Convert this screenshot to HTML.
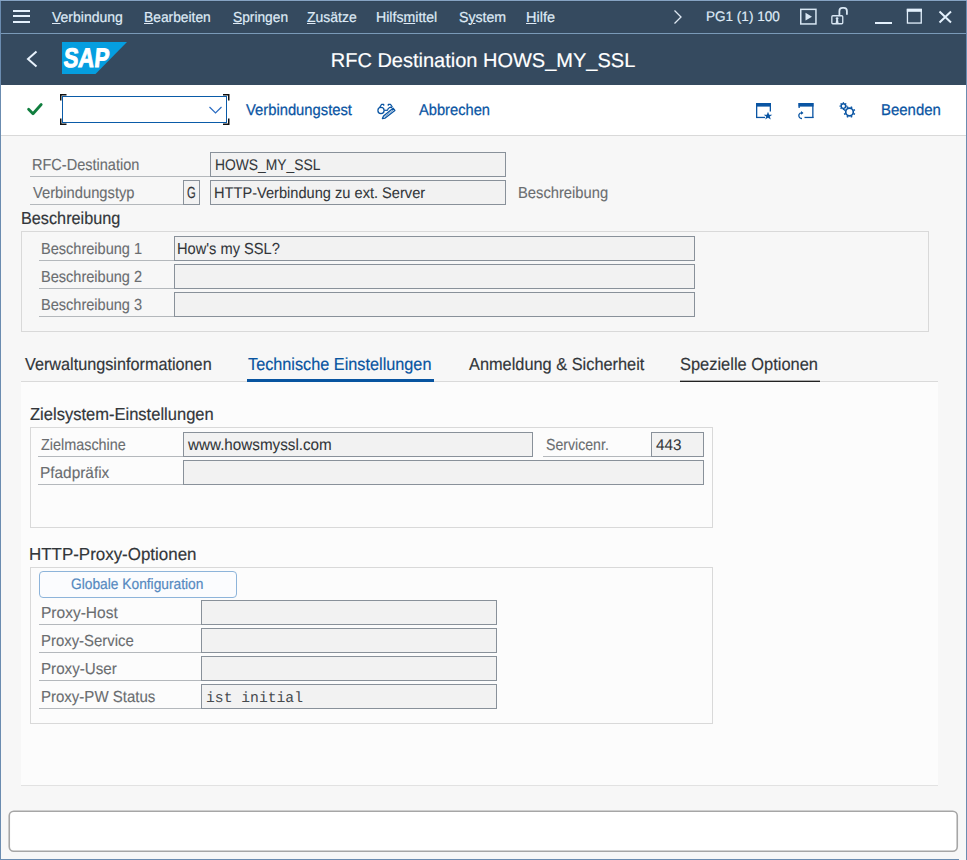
<!DOCTYPE html>
<html><head><meta charset="utf-8"><style>
html,body{margin:0;padding:0;width:967px;height:860px;overflow:hidden;background:#f7f7f7;text-rendering:geometricPrecision}
</style></head><body>
<div style="position:absolute;left:0px;top:0px;width:967px;height:860px;background:#f7f7f7"></div>
<div style="position:absolute;left:1px;top:1px;width:965px;height:84px;background:#354a5f"></div>
<div style="position:absolute;left:1px;top:1px;width:965px;height:1px;background:#32465a"></div>
<div style="position:absolute;left:1px;top:33px;width:965px;height:1px;background:#7a9ab8"></div>
<div style="position:absolute;left:13px;top:10px;width:17px;height:2px;background:#e3f0fc"></div>
<div style="position:absolute;left:13px;top:15px;width:17px;height:2px;background:#e3f0fc"></div>
<div style="position:absolute;left:13px;top:21px;width:17px;height:2px;background:#e3f0fc"></div>
<div style="position:absolute;left:51.98px;top:11px;font:14.5px/14.5px 'Liberation Sans', sans-serif;color:#dfeaf6;white-space:pre;transform:scaleX(0.9647);transform-origin:0 0;-webkit-text-stroke:0.2px #dfeaf6"><span style="text-decoration:underline;text-decoration-thickness:1px;text-underline-offset:0.5px">V</span>erbindung</div>
<div style="position:absolute;left:143.76px;top:11px;font:14.5px/14.5px 'Liberation Sans', sans-serif;color:#dfeaf6;white-space:pre;transform:scaleX(0.9519);transform-origin:0 0;-webkit-text-stroke:0.2px #dfeaf6"><span style="text-decoration:underline;text-decoration-thickness:1px;text-underline-offset:0.5px">B</span>earbeiten</div>
<div style="position:absolute;left:233.26px;top:11px;font:14.5px/14.5px 'Liberation Sans', sans-serif;color:#dfeaf6;white-space:pre;transform:scaleX(0.9483);transform-origin:0 0;-webkit-text-stroke:0.2px #dfeaf6"><span style="text-decoration:underline;text-decoration-thickness:1px;text-underline-offset:0.5px">S</span>pringen</div>
<div style="position:absolute;left:307.48px;top:11px;font:14.5px/14.5px 'Liberation Sans', sans-serif;color:#dfeaf6;white-space:pre;transform:scaleX(0.9631);transform-origin:0 0;-webkit-text-stroke:0.2px #dfeaf6"><span style="text-decoration:underline;text-decoration-thickness:1px;text-underline-offset:0.5px">Z</span>usätze</div>
<div style="position:absolute;left:376.00px;top:11px;font:14.5px/14.5px 'Liberation Sans', sans-serif;color:#dfeaf6;white-space:pre;transform:scaleX(0.9738);transform-origin:0 0;-webkit-text-stroke:0.2px #dfeaf6">Hilfs<span style="text-decoration:underline;text-decoration-thickness:1px;text-underline-offset:0.5px">m</span>ittel</div>
<div style="position:absolute;left:459.00px;top:11px;font:14.5px/14.5px 'Liberation Sans', sans-serif;color:#dfeaf6;white-space:pre;transform:scaleX(0.9752);transform-origin:0 0;-webkit-text-stroke:0.2px #dfeaf6">S<span style="text-decoration:underline;text-decoration-thickness:1px;text-underline-offset:0.5px">y</span>stem</div>
<div style="position:absolute;left:526.20px;top:11px;font:14.5px/14.5px 'Liberation Sans', sans-serif;color:#dfeaf6;white-space:pre;transform:scaleX(0.9977);transform-origin:0 0;-webkit-text-stroke:0.2px #dfeaf6"><span style="text-decoration:underline;text-decoration-thickness:1px;text-underline-offset:0.5px">H</span>ilfe</div>
<svg style="position:absolute;left:670px;top:8px" width="16" height="18"><path d="M4.5 2.5 L11 9 L4.5 15.5" fill="none" stroke="#dfe9f3" stroke-width="1.3"/></svg>
<div style="position:absolute;left:706.00px;top:10px;font:13.8px/13.8px 'Liberation Sans', sans-serif;color:#dfeaf6;white-space:pre;transform:scaleX(0.9810);transform-origin:0 0;-webkit-text-stroke:0.18px #dfeaf6">PG1 (1) 100</div>
<svg style="position:absolute;left:799px;top:8px" width="20" height="18"><rect x="1.75" y="1.35" width="15.2" height="14.6" fill="none" stroke="#d8e6f3" stroke-width="1.5"/><path d="M6.5 4.8 L13 8.7 L6.5 12.6 Z" fill="#d8e6f3"/></svg>
<svg style="position:absolute;left:829px;top:5px" width="22" height="22"><rect x="2.85" y="10.75" width="10.9" height="8" rx="1" fill="none" stroke="#d8e6f3" stroke-width="1.3"/><path d="M10.4 10.5 V6 Q10.4 2.9 13.5 2.9 H14.8 Q17.9 2.9 17.9 6 V9.7" fill="none" stroke="#d8e6f3" stroke-width="1.8"/><circle cx="8.1" cy="13.6" r="1.35" fill="#d8e6f3"/><path d="M6.6 17.9 L9.6 17.9 L8.9 14.2 L7.3 14.2 Z" fill="#d8e6f3"/></svg>
<div style="position:absolute;left:875px;top:22px;width:17px;height:2px;background:#e3f0fc"></div>
<svg style="position:absolute;left:906px;top:8px" width="17" height="17"><rect x="1.45" y="1.45" width="13.8" height="13.6" fill="none" stroke="#e3f0fc" stroke-width="1.3"/><rect x="0.8" y="0.8" width="15.1" height="3" fill="#e3f0fc"/></svg>
<svg style="position:absolute;left:938px;top:10px" width="15" height="14"><path d="M1.5 1.5 L13 12.5 M13 1.5 L1.5 12.5" stroke="#e3f0fc" stroke-width="2"/></svg>
<svg style="position:absolute;left:24px;top:48px" width="16" height="22"><path d="M12.5 3.5 L4 11 L12.5 18.5" fill="none" stroke="#e8f2fc" stroke-width="2"/></svg>
<svg style="position:absolute;left:62px;top:42px" width="66" height="32"><path d="M0 0 H65 L33.5 32 H0 Z" fill="#059ee0"/><text x="1.2" y="24.6" font-family="Liberation Sans" font-weight="700" font-size="27" fill="#fff" stroke="#fff" stroke-width="1" textLength="45.3" lengthAdjust="spacingAndGlyphs" transform="translate(2.3 0) skewX(-5.5)">SAP</text></svg>
<div style="position:absolute;left:330.72px;top:51px;font:20px/20px 'Liberation Sans', sans-serif;color:#ffffff;white-space:pre;-webkit-text-stroke:0.18px #ffffff">RFC Destination HOWS_MY_SSL</div>
<div style="position:absolute;left:1px;top:85px;width:965px;height:50px;background:#ffffff"></div>
<div style="position:absolute;left:1px;top:135px;width:965px;height:1px;background:#d9d9d9"></div>
<svg style="position:absolute;left:26px;top:101px" width="18" height="17"><path d="M2.6 8.3 L7 12.7 L15.2 3.5" fill="none" stroke="#107e3e" stroke-width="2.8" stroke-linecap="round" stroke-linejoin="round"/></svg>
<div style="position:absolute;left:62px;top:96px;width:165px;height:27px;border:1px solid #0a5ba8;box-sizing:border-box;background:#fff"></div>
<svg style="position:absolute;left:59px;top:93px" width="172" height="33"><path d="M1.75 7.5 V1.75 H7.5 M164 1.75 H169.75 V7.5 M169.75 25.5 V31.25 H164 M7.5 31.25 H1.75 V25.5" fill="none" stroke="#111" stroke-width="1.5"/></svg>
<svg style="position:absolute;left:207px;top:104px" width="16" height="12"><path d="M2.5 3 L8.5 9 L14.5 3" fill="none" stroke="#2a6cc2" stroke-width="1.2"/></svg>
<div style="position:absolute;left:245.98px;top:103px;font:15.6px/15.6px 'Liberation Sans', sans-serif;color:#0a55a3;white-space:pre;transform:scaleX(0.9474);transform-origin:0 0;-webkit-text-stroke:0.25px #0a55a3">Verbindungstest</div>
<div style="position:absolute;left:418.98px;top:103px;font:15.6px/15.6px 'Liberation Sans', sans-serif;color:#0a55a3;white-space:pre;transform:scaleX(0.9409);transform-origin:0 0;-webkit-text-stroke:0.25px #0a55a3">Abbrechen</div>
<div style="position:absolute;left:880.68px;top:103px;font:15.6px/15.6px 'Liberation Sans', sans-serif;color:#0a55a3;white-space:pre;transform:scaleX(0.9580);transform-origin:0 0;-webkit-text-stroke:0.25px #0a55a3">Beenden</div>
<svg style="position:absolute;left:372px;top:98px" width="28" height="24"><g fill="none" stroke="#0a55a3" stroke-width="1.25" stroke-linejoin="round"><circle cx="9" cy="12.5" r="3.1"/><path d="M12.2 12.3 H15.8"/><path d="M7.6 9.6 L9.6 6.3 H11.7 V7.8"/><path d="M16.3 7.8 V6.3 H18.5 L20.4 9"/><path d="M15.6 12.2 A3.2 3.2 0 0 1 20.2 9.6"/><path d="M10.4 20.6 L13.2 20.1 L22.9 12.4 L21.1 10.2 L11.5 17.9 Z"/><path d="M12.3 19 L22 11.3" stroke-width="0.6"/></g></svg>
<svg style="position:absolute;left:754px;top:101px" width="20" height="20"><g fill="#0a55a3"><rect x="2" y="2" width="15" height="3.6"/><rect x="2" y="2" width="1.3" height="15"/><rect x="2" y="15.8" width="9" height="1.3"/><rect x="15.7" y="2" width="1.3" height="8.5"/><path d="M14 10.8 L15.2 13.8 L18.3 13.8 L15.8 15.6 L16.8 18.5 L14 16.8 L11.2 18.5 L12.2 15.6 L9.7 13.8 L12.8 13.8 Z"/></g></svg>
<svg style="position:absolute;left:796px;top:101px" width="20" height="20"><g fill="#0a55a3"><rect x="2.5" y="2" width="15" height="3.6"/><rect x="16.2" y="2" width="1.3" height="15"/><rect x="8.5" y="15.8" width="9" height="1.3"/><rect x="2.5" y="2" width="1.3" height="5"/></g><path d="M6 17.5 A3 3 0 0 1 3 13.5 A3 3 0 0 1 6.5 12" fill="none" stroke="#0a55a3" stroke-width="1.3"/><path d="M5 10 L7.5 12 L5 13.8 Z" fill="#0a55a3"/></svg>
<svg style="position:absolute;left:835px;top:98px" width="24" height="24"><circle cx="8.4" cy="8.1" r="2.3" fill="none" stroke="#0a55a3" stroke-width="1.5"/><line x1="11.20" y1="8.10" x2="12.30" y2="8.10" stroke="#0a55a3" stroke-width="1.3"/><line x1="10.38" y1="10.08" x2="11.16" y2="10.86" stroke="#0a55a3" stroke-width="1.3"/><line x1="8.40" y1="10.90" x2="8.40" y2="12.00" stroke="#0a55a3" stroke-width="1.3"/><line x1="6.42" y1="10.08" x2="5.64" y2="10.86" stroke="#0a55a3" stroke-width="1.3"/><line x1="5.60" y1="8.10" x2="4.50" y2="8.10" stroke="#0a55a3" stroke-width="1.3"/><line x1="6.42" y1="6.12" x2="5.64" y2="5.34" stroke="#0a55a3" stroke-width="1.3"/><line x1="8.40" y1="5.30" x2="8.40" y2="4.20" stroke="#0a55a3" stroke-width="1.3"/><line x1="10.38" y1="6.12" x2="11.16" y2="5.34" stroke="#0a55a3" stroke-width="1.3"/><circle cx="14.5" cy="14" r="5.4" fill="#fff"/><circle cx="14.5" cy="14" r="3.8" fill="none" stroke="#0a55a3" stroke-width="1.7"/><line x1="18.57" y1="15.68" x2="19.95" y2="16.26" stroke="#0a55a3" stroke-width="1.7"/><line x1="16.18" y1="18.07" x2="16.76" y2="19.45" stroke="#0a55a3" stroke-width="1.7"/><line x1="12.82" y1="18.07" x2="12.24" y2="19.45" stroke="#0a55a3" stroke-width="1.7"/><line x1="10.43" y1="15.68" x2="9.05" y2="16.26" stroke="#0a55a3" stroke-width="1.7"/><line x1="10.43" y1="12.32" x2="9.05" y2="11.74" stroke="#0a55a3" stroke-width="1.7"/><line x1="12.82" y1="9.93" x2="12.24" y2="8.55" stroke="#0a55a3" stroke-width="1.7"/><line x1="16.18" y1="9.93" x2="16.76" y2="8.55" stroke="#0a55a3" stroke-width="1.7"/><line x1="18.57" y1="12.32" x2="19.95" y2="11.74" stroke="#0a55a3" stroke-width="1.7"/></svg>
<div style="position:absolute;left:32.20px;top:158px;font:16.0px/16.0px 'Liberation Sans', sans-serif;color:#6a6d70;white-space:pre;transform:scaleX(0.9075);transform-origin:0 0;-webkit-text-stroke:0.12px #6a6d70">RFC-Destination</div>
<div style="position:absolute;left:30px;top:176px;width:180px;height:1px;background:#b4b8bc"></div>
<div style="position:absolute;left:210px;top:152px;width:296px;height:25px;border:1px solid #89919a;box-sizing:border-box;background:#f2f2f2"></div>
<div style="position:absolute;left:214.76px;top:158px;font:15.4px/15.4px 'Liberation Sans', sans-serif;color:#32363a;white-space:pre;transform:scaleX(0.8999);transform-origin:0 0;-webkit-text-stroke:0.08px #32363a">HOWS_MY_SSL</div>
<div style="position:absolute;left:33.00px;top:186px;font:16.0px/16.0px 'Liberation Sans', sans-serif;color:#6a6d70;white-space:pre;transform:scaleX(0.9204);transform-origin:0 0;-webkit-text-stroke:0.12px #6a6d70">Verbindungstyp</div>
<div style="position:absolute;left:30px;top:204px;width:153px;height:1px;background:#b4b8bc"></div>
<div style="position:absolute;left:183px;top:180px;width:17px;height:25px;border:1px solid #89919a;box-sizing:border-box;background:#f2f2f2"></div>
<div style="position:absolute;left:186.98px;top:186px;font:16.0px/16.0px 'Liberation Sans', sans-serif;color:#32363a;white-space:pre;transform:scaleX(0.6989);transform-origin:0 0;-webkit-text-stroke:0.18px #32363a">G</div>
<div style="position:absolute;left:210px;top:180px;width:296px;height:25px;border:1px solid #89919a;box-sizing:border-box;background:#f2f2f2"></div>
<div style="position:absolute;left:213.96px;top:186px;font:15.4px/15.4px 'Liberation Sans', sans-serif;color:#32363a;white-space:pre;transform:scaleX(0.9494);transform-origin:0 0;-webkit-text-stroke:0.08px #32363a">HTTP-Verbindung zu ext. Server</div>
<div style="position:absolute;left:517.70px;top:186px;font:16.0px/16.0px 'Liberation Sans', sans-serif;color:#6a6d70;white-space:pre;transform:scaleX(0.9209);transform-origin:0 0;-webkit-text-stroke:0.12px #6a6d70">Beschreibung</div>
<div style="position:absolute;left:21.20px;top:210px;font:17.4px/17.4px 'Liberation Sans', sans-serif;color:#32363a;white-space:pre;transform:scaleX(0.9338);transform-origin:0 0;-webkit-text-stroke:0.18px #32363a">Beschreibung</div>
<div style="position:absolute;left:21px;top:231px;width:908px;height:101px;border:1px solid #d9d9d9;box-sizing:border-box"></div>
<div style="position:absolute;left:41.20px;top:242px;font:16.0px/16.0px 'Liberation Sans', sans-serif;color:#6a6d70;white-space:pre;transform:scaleX(0.9091);transform-origin:0 0;-webkit-text-stroke:0.12px #6a6d70">Beschreibung 1</div>
<div style="position:absolute;left:39px;top:260px;width:135px;height:1px;background:#b4b8bc"></div>
<div style="position:absolute;left:174px;top:236px;width:521px;height:25px;border:1px solid #89919a;box-sizing:border-box;background:#f2f2f2"></div>
<div style="position:absolute;left:41.20px;top:270px;font:16.0px/16.0px 'Liberation Sans', sans-serif;color:#6a6d70;white-space:pre;transform:scaleX(0.9091);transform-origin:0 0;-webkit-text-stroke:0.12px #6a6d70">Beschreibung 2</div>
<div style="position:absolute;left:39px;top:288px;width:135px;height:1px;background:#b4b8bc"></div>
<div style="position:absolute;left:174px;top:264px;width:521px;height:25px;border:1px solid #89919a;box-sizing:border-box;background:#f2f2f2"></div>
<div style="position:absolute;left:41.20px;top:298px;font:16.0px/16.0px 'Liberation Sans', sans-serif;color:#6a6d70;white-space:pre;transform:scaleX(0.9091);transform-origin:0 0;-webkit-text-stroke:0.12px #6a6d70">Beschreibung 3</div>
<div style="position:absolute;left:39px;top:316px;width:135px;height:1px;background:#b4b8bc"></div>
<div style="position:absolute;left:174px;top:292px;width:521px;height:25px;border:1px solid #89919a;box-sizing:border-box;background:#f2f2f2"></div>
<div style="position:absolute;left:177.42px;top:242px;font:16.0px/16.0px 'Liberation Sans', sans-serif;color:#32363a;white-space:pre;transform:scaleX(0.9145);transform-origin:0 0;-webkit-text-stroke:0.08px #32363a">How's my SSL?</div>
<div style="position:absolute;left:21px;top:381px;width:917px;height:405px;background:#fcfcfc"></div>
<div style="position:absolute;left:21px;top:381px;width:917px;height:1px;background:#dadada"></div>
<div style="position:absolute;left:21px;top:785px;width:917px;height:1px;background:#e2e2e2"></div>
<div style="position:absolute;left:24.74px;top:356px;font:17.4px/17.4px 'Liberation Sans', sans-serif;color:#32363a;white-space:pre;transform:scaleX(0.9328);transform-origin:0 0;-webkit-text-stroke:0.18px #32363a">Verwaltungsinformationen</div>
<div style="position:absolute;left:248.48px;top:356px;font:17.4px/17.4px 'Liberation Sans', sans-serif;color:#0854a0;white-space:pre;transform:scaleX(0.9347);transform-origin:0 0;-webkit-text-stroke:0.18px #0854a0">Technische Einstellungen</div>
<div style="position:absolute;left:247px;top:379px;width:187px;height:3px;background:#0854a0"></div>
<div style="position:absolute;left:468.76px;top:356px;font:17.4px/17.4px 'Liberation Sans', sans-serif;color:#32363a;white-space:pre;transform:scaleX(0.9399);transform-origin:0 0;-webkit-text-stroke:0.18px #32363a">Anmeldung &amp; Sicherheit</div>
<div style="position:absolute;left:680.48px;top:356px;font:17.4px/17.4px 'Liberation Sans', sans-serif;color:#32363a;white-space:pre;transform:scaleX(0.9449);transform-origin:0 0;-webkit-text-stroke:0.18px #32363a">Spezielle Optionen</div>
<div style="position:absolute;left:680px;top:381px;width:140px;height:1px;background:#222"></div>
<div style="position:absolute;left:680px;top:380px;width:140px;height:1px;background:rgba(34,34,34,0.35)"></div>
<div style="position:absolute;left:30.26px;top:406px;font:17.4px/17.4px 'Liberation Sans', sans-serif;color:#32363a;white-space:pre;transform:scaleX(0.9503);transform-origin:0 0;-webkit-text-stroke:0.18px #32363a">Zielsystem-Einstellungen</div>
<div style="position:absolute;left:30px;top:427px;width:683px;height:101px;border:1px solid #d9d9d9;box-sizing:border-box"></div>
<div style="position:absolute;left:41.00px;top:438px;font:16.0px/16.0px 'Liberation Sans', sans-serif;color:#6a6d70;white-space:pre;transform:scaleX(0.8995);transform-origin:0 0;-webkit-text-stroke:0.12px #6a6d70">Zielmaschine</div>
<div style="position:absolute;left:38px;top:456px;width:145px;height:1px;background:#b4b8bc"></div>
<div style="position:absolute;left:183px;top:432px;width:350px;height:25px;border:1px solid #89919a;box-sizing:border-box;background:#f2f2f2"></div>
<div style="position:absolute;left:187.55px;top:438px;font:16.0px/16.0px 'Liberation Sans', sans-serif;color:#32363a;white-space:pre;transform:scaleX(0.9511);transform-origin:0 0;-webkit-text-stroke:0.08px #32363a">www.howsmyssl.com</div>
<div style="position:absolute;left:545.76px;top:438px;font:16.0px/16.0px 'Liberation Sans', sans-serif;color:#6a6d70;white-space:pre;transform:scaleX(0.8831);transform-origin:0 0;-webkit-text-stroke:0.12px #6a6d70">Servicenr.</div>
<div style="position:absolute;left:543px;top:456px;width:108px;height:1px;background:#b4b8bc"></div>
<div style="position:absolute;left:651px;top:432px;width:53px;height:25px;border:1px solid #89919a;box-sizing:border-box;background:#f2f2f2"></div>
<div style="position:absolute;left:656.02px;top:438px;font:15.4px/15.4px 'Liberation Sans', sans-serif;color:#32363a;white-space:pre;transform:scaleX(0.9919);transform-origin:0 0;-webkit-text-stroke:0.08px #32363a">443</div>
<div style="position:absolute;left:40.20px;top:466px;font:16.0px/16.0px 'Liberation Sans', sans-serif;color:#6a6d70;white-space:pre;transform:scaleX(0.9621);transform-origin:0 0;-webkit-text-stroke:0.12px #6a6d70">Pfadpräfix</div>
<div style="position:absolute;left:38px;top:484px;width:145px;height:1px;background:#b4b8bc"></div>
<div style="position:absolute;left:183px;top:460px;width:521px;height:25px;border:1px solid #89919a;box-sizing:border-box;background:#f2f2f2"></div>
<div style="position:absolute;left:29.18px;top:546px;font:17.4px/17.4px 'Liberation Sans', sans-serif;color:#32363a;white-space:pre;transform:scaleX(0.9736);transform-origin:0 0;-webkit-text-stroke:0.18px #32363a">HTTP-Proxy-Optionen</div>
<div style="position:absolute;left:30px;top:567px;width:683px;height:157px;border:1px solid #d9d9d9;box-sizing:border-box"></div>
<div style="position:absolute;left:39px;top:571px;width:198px;height:27px;border:1px solid #8db4da;border-radius:4px;box-sizing:border-box;background:#fbfcfe"></div>
<div style="position:absolute;left:71.48px;top:577px;font:15.1px/15.1px 'Liberation Sans', sans-serif;color:#5589c0;white-space:pre;transform:scaleX(0.9123);transform-origin:0 0;-webkit-text-stroke:0.2px #5589c0">Globale Konfiguration</div>
<div style="position:absolute;left:40.70px;top:606px;font:16.0px/16.0px 'Liberation Sans', sans-serif;color:#6a6d70;white-space:pre;transform:scaleX(0.9707);transform-origin:0 0;-webkit-text-stroke:0.12px #6a6d70">Proxy-Host</div>
<div style="position:absolute;left:39px;top:624px;width:162px;height:1px;background:#b4b8bc"></div>
<div style="position:absolute;left:201px;top:600px;width:296px;height:25px;border:1px solid #89919a;box-sizing:border-box;background:#f2f2f2"></div>
<div style="position:absolute;left:40.70px;top:634px;font:16.0px/16.0px 'Liberation Sans', sans-serif;color:#6a6d70;white-space:pre;transform:scaleX(0.9319);transform-origin:0 0;-webkit-text-stroke:0.12px #6a6d70">Proxy-Service</div>
<div style="position:absolute;left:39px;top:652px;width:162px;height:1px;background:#b4b8bc"></div>
<div style="position:absolute;left:201px;top:628px;width:296px;height:25px;border:1px solid #89919a;box-sizing:border-box;background:#f2f2f2"></div>
<div style="position:absolute;left:40.70px;top:662px;font:16.0px/16.0px 'Liberation Sans', sans-serif;color:#6a6d70;white-space:pre;transform:scaleX(0.9473);transform-origin:0 0;-webkit-text-stroke:0.12px #6a6d70">Proxy-User</div>
<div style="position:absolute;left:39px;top:680px;width:162px;height:1px;background:#b4b8bc"></div>
<div style="position:absolute;left:201px;top:656px;width:296px;height:25px;border:1px solid #89919a;box-sizing:border-box;background:#f2f2f2"></div>
<div style="position:absolute;left:40.70px;top:690px;font:16.0px/16.0px 'Liberation Sans', sans-serif;color:#6a6d70;white-space:pre;transform:scaleX(0.9382);transform-origin:0 0;-webkit-text-stroke:0.12px #6a6d70">Proxy-PW Status</div>
<div style="position:absolute;left:39px;top:708px;width:162px;height:1px;background:#b4b8bc"></div>
<div style="position:absolute;left:201px;top:684px;width:296px;height:25px;border:1px solid #89919a;box-sizing:border-box;background:#f2f2f2"></div>
<div style="position:absolute;left:205.98px;top:692px;font:14.8px/14.8px 'Liberation Mono', monospace;color:#464a4e;white-space:pre;transform:scaleX(0.9931);transform-origin:0 0;">ist initial</div>
<svg style="position:absolute;left:0;top:800px" width="967" height="60"><rect x="9.25" y="11.25" width="948" height="40" rx="4.5" fill="#fff" stroke="#a6a6a6" stroke-width="1.6"/></svg>
<div style="position:absolute;left:0px;top:0px;width:1px;height:860px;background:#6b8cb0"></div>
<div style="position:absolute;left:966px;top:0px;width:1px;height:860px;background:#6b8cb0"></div>
<div style="position:absolute;left:0px;top:0px;width:967px;height:1px;background:#86a3c3"></div>
<div style="position:absolute;left:0px;top:859px;width:959px;height:1px;background:#6b8cb0"></div>
</body></html>
